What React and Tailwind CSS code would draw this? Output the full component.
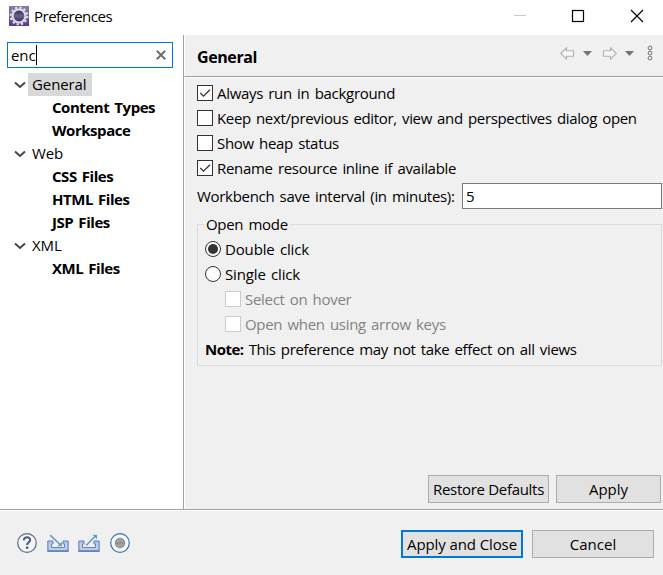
import React, { useState } from 'react';

const tree = [
  { name: 'General', children: [{ name: 'Content Types' }, { name: 'Workspace' }] },
  { name: 'Web', children: [{ name: 'CSS Files' }, { name: 'HTML Files' }, { name: 'JSP Files' }] },
  { name: 'XML', children: [{ name: 'XML Files' }] },
];

const EclipseIcon = () => (
  <svg width="20" height="20" viewBox="0 0 20 20" className="block">
    <defs>
      <linearGradient id="tile" x1="0" y1="0" x2="0" y2="1">
        <stop offset="0" stopColor="#8a7ba6" />
        <stop offset="1" stopColor="#55398c" />
      </linearGradient>
      <linearGradient id="core" x1="0" y1="0" x2="0" y2="1">
        <stop offset="0" stopColor="#28204a" />
        <stop offset="0.5" stopColor="#69658a" />
        <stop offset="1" stopColor="#302653" />
      </linearGradient>
    </defs>
    <rect width="20" height="20" fill="url(#tile)" />
    <circle cx="10" cy="10" r="8.3" fill="none" stroke="#dedbe4" strokeWidth="2.2" strokeDasharray="2.35 2" />
    <circle cx="10" cy="10" r="6.5" fill="url(#core)" stroke="#dedbe4" strokeWidth="2.2" />
  </svg>
);

const Chevron = () => (
  <svg width="12" height="8" viewBox="0 0 12 8" className="block">
    <path d="M1 1.5 L6 6 L11 1.5" fill="none" stroke="#464646" strokeWidth="2" />
  </svg>
);

const TreeRow = ({ item, selected, onSelect }) => (
  <div>
    <div className="flex h-[23px] items-center pl-[14px]">
      <Chevron />
      <button
        onClick={() => onSelect(item.name)}
        className={`ml-[2px] flex h-[23px] items-center pb-[2px] pl-1 pr-[5px] tracking-[-0.1px] ${selected === item.name ? 'bg-[#d9d9d9]' : ''}`}
      >
        {item.name}
      </button>
    </div>
    {item.children.map(child => (
      <div key={child.name} className="flex h-[23px] items-center pb-[2px] pl-[52px] font-bold tracking-[-0.45px]">
        {child.name}
      </div>
    ))}
  </div>
);

const CheckBox = ({ checked, disabled }) => (
  <span className={`flex h-4 w-4 shrink-0 items-center justify-center border bg-white ${disabled ? 'border-[#cccccc]' : 'border-[#333333]'}`}>
    {checked && (
      <svg width="14" height="14" viewBox="0 0 14 14" className="block">
        <path d="M2.3 7 L5.5 10.2 L12 3.7" fill="none" stroke="#333333" strokeWidth="1.3" />
      </svg>
    )}
  </span>
);

const CheckRow = ({ label, checked, disabled, tight }) => (
  <div className={`flex h-[25px] items-center ${disabled ? 'text-[#838383]' : ''}`}>
    <CheckBox checked={checked} disabled={disabled} />
    <span className={`ml-1 ${tight ? 'tracking-[-0.34px]' : ''}`}>{label}</span>
  </div>
);

const RadioRow = ({ label, checked, onClick }) => (
  <div className="flex h-[25px] items-center" onClick={onClick}>
    <span className="flex h-4 w-4 items-center justify-center rounded-full border border-[#333333] bg-white">
      {checked && <span className="h-[10px] w-[10px] rounded-full bg-[#333333]" />}
    </span>
    <span className="ml-1 tracking-[-0.15px]">{label}</span>
  </div>
);

const BackArrow = ({ flip }) => (
  <svg width="15" height="13" viewBox="0 0 15 13" className={flip ? 'block -scale-x-100' : 'block'}>
    <path d="M0.8 6.5 L6.5 0.8 V3.8 H13.5 V9.2 H6.5 V12.2 Z" fill="#f7f7f7" stroke="#b2b2b2" strokeWidth="1.1" />
  </svg>
);

const DropArrow = () => (
  <svg width="9" height="5" viewBox="0 0 9 5" className="block">
    <path d="M0 0 H9 L4.5 5 Z" fill="#737378" />
  </svg>
);

const TrayIcon = ({ out }) => (
  <svg width="22" height="20" viewBox="0 0 22 20" className="block">
    <path d="M0.8 8 H6 V11 H4.5 V14.5 H17.5 V11 H16 V8 H21.2 V18.5 H0.8 Z" fill="#a9bfe1" stroke="#6684b9" strokeWidth="1" />
    <path d="M3 9.5 V16 H19 V9.5" fill="none" stroke="#d7e4f5" strokeWidth="0.8" />
    <path d="M0.5 18 H21.5" stroke="#6684b9" strokeWidth="1.6" />
    {out ? (
      <g>
        <path d="M8 12.5 L17 3.5" stroke="#609fc4" strokeWidth="1.6" />
        <path d="M14.5 1.7 H19 V6.2 Z" fill="#609fc4" />
      </g>
    ) : (
      <g>
        <path d="M3.2 2.2 L12.5 11" stroke="#609fc4" strokeWidth="1.6" />
        <path d="M15 8.7 V13.3 H10.3 Z" fill="#609fc4" />
      </g>
    )}
  </svg>
);

export default function App() {
  const [query, setQuery] = useState('enc');
  const [selected, setSelected] = useState('General');
  const [mode, setMode] = useState('double');

  return (
    <div className="flex h-[575px] w-[663px] flex-col overflow-hidden whitespace-nowrap bg-[#f0f0f0] font-['Open_Sans','Noto_Sans',sans-serif] text-[15px] leading-5 tracking-[-0.3px] text-black [word-spacing:1.6px]">
      {/* Title bar */}
      <div className="flex h-[35px] shrink-0 bg-white pl-[9px]">
        <div className="pt-[6px]"><EclipseIcon /></div>
        <div className="ml-[5px] flex-1 pt-[6px] tracking-[-0.5px]">Preferences</div>
        <svg width="149" height="32" viewBox="0 0 149 32" className="block" fill="none">
          <path d="M0 15.5 H12" stroke="#cccccc" />
          <rect x="58.5" y="10.5" width="11" height="11" stroke="black" strokeWidth="1.2" />
          <path d="M117 10 L129 22 M129 10 L117 22" stroke="black" strokeWidth="1.2" />
        </svg>
      </div>

      <div className="flex h-[474px] shrink-0">
        {/* Tree */}
        <div className="w-[183px] shrink-0 bg-white pt-[7px]">
          <div className="ml-[7px] flex h-[26px] w-[166px] items-center border border-[#0078d7] pl-[3px] pr-[6px]">
            <span className="tracking-[-0.1px]">{query}</span>
            <span className="h-[20px] w-px bg-black" />
            <button className="ml-auto" onClick={() => setQuery('')}>
              <svg width="10" height="10" viewBox="0 0 10 10" className="block">
                <path d="M0.8 0.8 L9.2 9.2 M9.2 0.8 L0.8 9.2" stroke="#6e6e6e" strokeWidth="2" />
              </svg>
            </button>
          </div>
          <div className="mt-[5px]">
            {tree.map(item => (
              <TreeRow key={item.name} item={item} selected={selected} onSelect={setSelected} />
            ))}
          </div>
        </div>

        {/* Page */}
        <div className="flex flex-1 flex-col border-l border-[#a0a0a0]">
          <div className="flex h-[42px] shrink-0 items-center border-b border-l border-b-[#a0a0a0] border-l-white pl-3">
            <h1 className="pt-[2px] text-base font-bold tracking-[-0.4px]">General</h1>
            <div className="ml-auto flex items-center pb-[5px] pr-[10px]">
              <BackArrow />
              <span className="ml-2"><DropArrow /></span>
              <span className="ml-[10px]"><BackArrow flip /></span>
              <span className="ml-2"><DropArrow /></span>
              <svg width="6" height="16" viewBox="0 0 6 16" className="ml-[13px] block" fill="none" stroke="#737378">
                <circle cx="3" cy="3" r="1.9" />
                <circle cx="3" cy="8" r="1.9" />
                <circle cx="3" cy="13" r="1.9" />
              </svg>
            </div>
          </div>
          <div className="flex flex-1 flex-col border-l border-t border-white pl-3 pr-px pt-[2px]">
            <CheckRow label="Always run in background" checked />
            <CheckRow label="Keep next/previous editor, view and perspectives dialog open" tight />
            <CheckRow label="Show heap status" />
            <CheckRow label="Rename resource inline if available" checked />
            <div className="mt-[3px] flex h-[26px] items-center justify-between">
              <span>Workbench save interval (in minutes):</span>
              <span className="flex h-[26px] w-[200px] items-center border border-[#7a7a7a] bg-white pl-[3px]">5</span>
            </div>
            <fieldset className="mt-[5px] h-[152px] border border-[#dcdcdc] pl-[7px]">
              <legend className="-ml-px h-[20px] px-[2px]">Open mode</legend>
              <div className="mt-[2px]">
                <RadioRow label="Double click" checked={mode === 'double'} onClick={() => setMode('double')} />
                <RadioRow label="Single click" checked={mode === 'single'} onClick={() => setMode('single')} />
                <div className="pl-5">
                  <CheckRow label="Select on hover" disabled />
                  <CheckRow label="Open when using arrow keys" disabled />
                </div>
                <div className="flex h-[25px] items-center">
                  <b className="mr-[5px] tracking-[-0.5px]">Note:</b>
                  <span className="tracking-[-0.34px]">This preference may not take effect on all views</span>
                </div>
              </div>
            </fieldset>
            <div className="mb-[6px] mr-px mt-auto flex justify-end gap-[7px]">
              <button className="h-[28px] w-[121px] border border-[#adadad] bg-[#e1e1e1]">Restore Defaults</button>
              <button className="h-[28px] w-[105px] border border-[#adadad] bg-[#e1e1e1] tracking-normal">Apply</button>
            </div>
          </div>
        </div>
      </div>

      {/* Button bar */}
      <div className="flex flex-1 items-center border-t border-[#a0a0a0] pl-[17px] pr-[9px] pt-px shadow-[inset_0_1px_0_white]">
        <div className="flex items-center">
          <svg width="20" height="20" viewBox="0 0 20 20" className="block">
            <circle cx="10" cy="10" r="9.3" fill="#f3f5f8" stroke="#5d6985" strokeWidth="1.2" />
            <path d="M6.8 7.3 C6.8 3.2 13.3 3.4 13.1 7.1 C13 9.4 10.1 9.2 10.1 12" fill="none" stroke="#4c5d83" strokeWidth="2.1" />
            <rect x="8.9" y="13.5" width="2.4" height="2.4" fill="#4c5d83" />
          </svg>
          <span className="ml-[10px]"><TrayIcon /></span>
          <span className="ml-[9px]"><TrayIcon out /></span>
          <svg width="20" height="20" viewBox="0 0 20 20" className="ml-[10px] block">
            <circle cx="10" cy="10" r="9.3" fill="#f4fafd" stroke="#3c74a5" strokeWidth="1.2" />
            <circle cx="10" cy="10" r="4.8" fill="#a0a0a0" stroke="#7c7c7c" strokeWidth="0.8" />
            <path d="M5.5 10 H14.5" stroke="#858585" />
          </svg>
        </div>
        <div className="ml-auto mt-[2px] flex gap-[9px]">
          <button className="h-[28px] w-[122px] border-2 border-[#0078d7] bg-[#e1e1e1] tracking-[-0.1px]">Apply and Close</button>
          <button className="h-[28px] w-[122px] border border-[#adadad] bg-[#e1e1e1] tracking-normal">Cancel</button>
        </div>
      </div>
    </div>
  );
}
